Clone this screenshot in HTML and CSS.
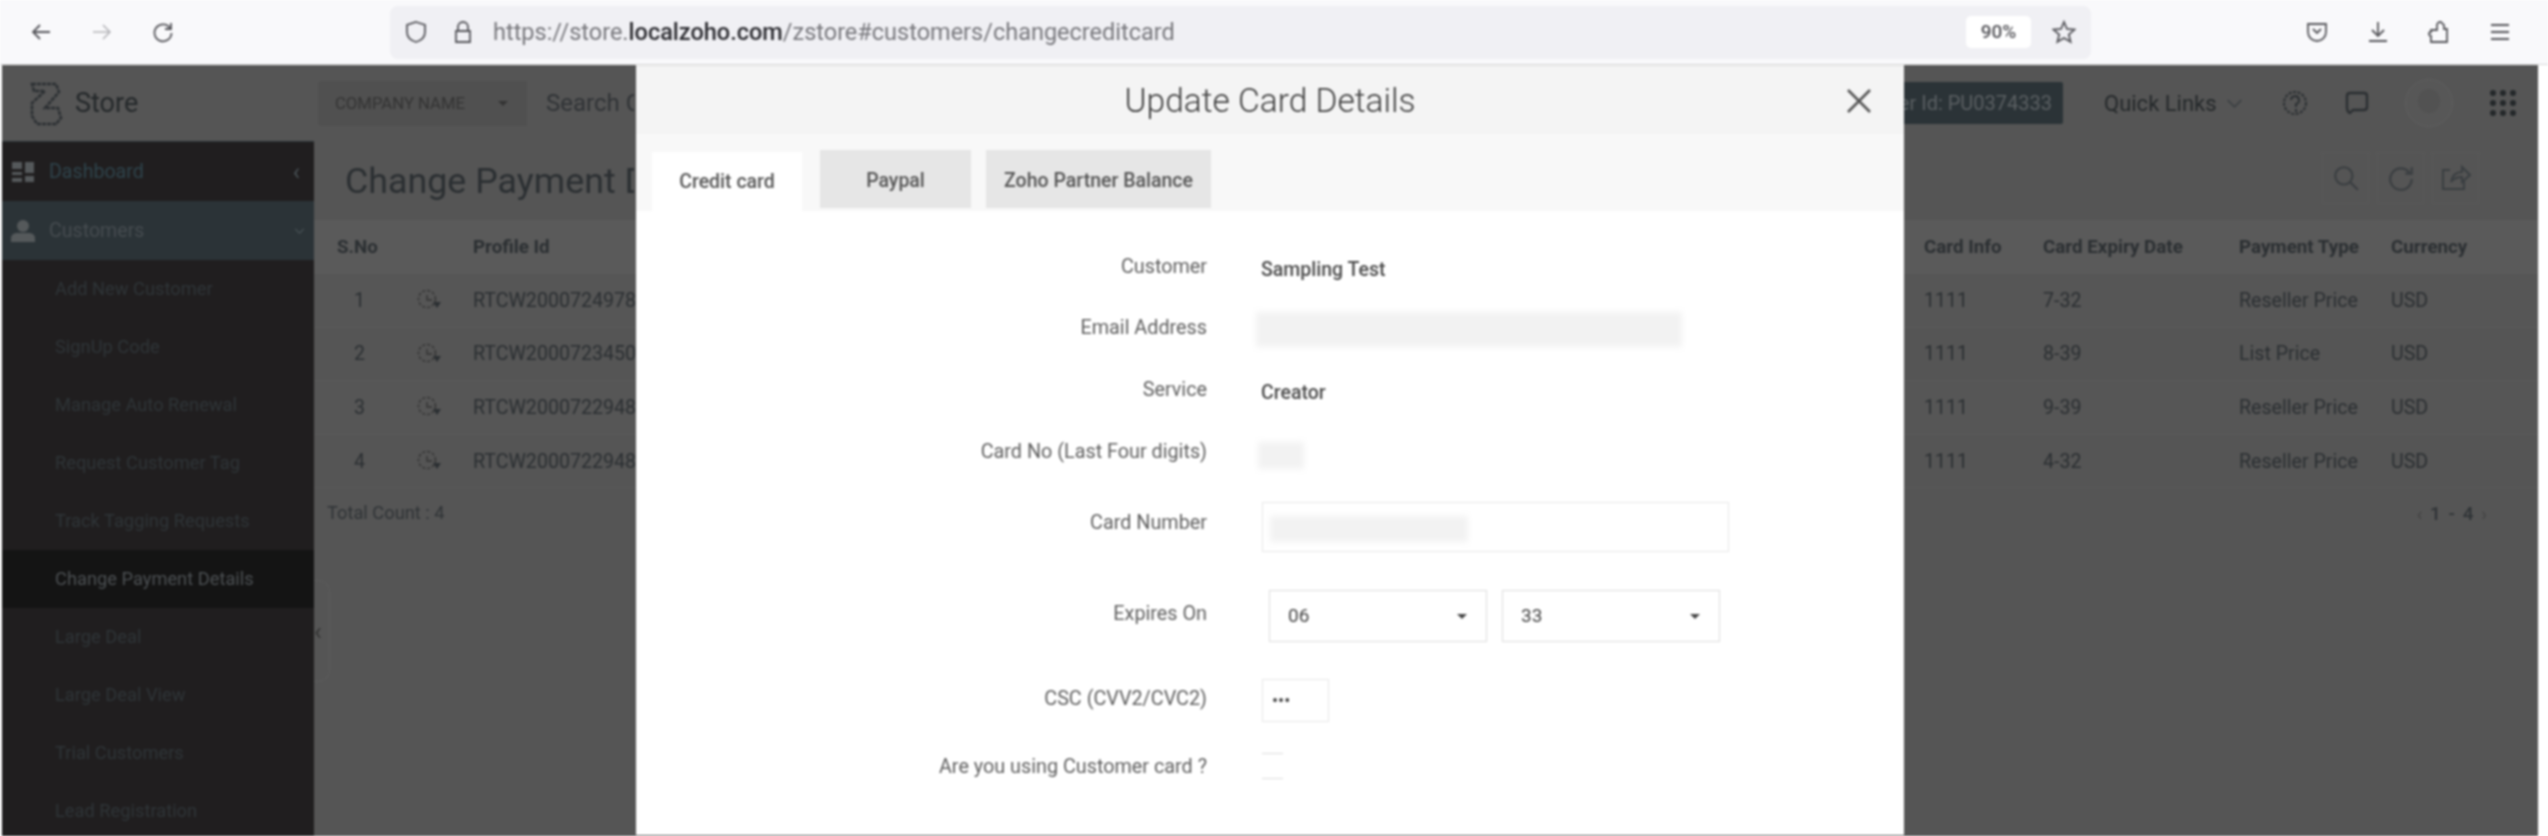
FILE: index.html
```html
<!DOCTYPE html>
<html lang="en">
<head>
    <meta charset="UTF-8">
    <meta name="viewport" content="width=device-width, initial-scale=1.0">
    <link rel="stylesheet" href="styles.css">
    <title>Update Card Details</title>
</head>
<body>
    <svg class="defs" width="0" height="0">
        <symbol id="renew" viewBox="0 0 26 26">
            <circle cx="11" cy="12" r="8.5" fill="none" stroke="#333" stroke-width="1.4" stroke-dasharray="3 2"/>
            <path d="M11 8v5h5" fill="none" stroke="#333" stroke-width="1.4"/>
            <path d="M17 15h8l-4 6z" fill="#2b2f32"/>
        </symbol>
    </svg>

    <!-- browser toolbar -->
    <div class="toolbar">
        <div class="nav-icons">
            <svg class="ico" viewBox="0 0 24 24"><path d="M21 12H4M11 5l-7 7 7 7"/></svg>
            <svg class="ico ico-off" viewBox="0 0 24 24"><path d="M3 12h17M13 5l7 7-7 7"/></svg>
            <svg class="ico" viewBox="0 0 24 24"><path d="M19 8a8.5 8.5 0 1 0 1.5 5M20 3v6h-6"/></svg>
        </div>
        <div class="urlbar">
            <svg class="ico" viewBox="0 0 24 24"><path d="M12 2l9 3v7c0 5-4 8.500-9 10-5-1.500-9-5-9-10V5z"/></svg>
            <svg class="ico" viewBox="0 0 24 24"><path d="M7 11V7a5 5 0 0 1 10 0v4M5 11h14v11H5z"/></svg>
            <div class="url">https://store.<b>localzoho.com</b>/zstore#customers/changecreditcard</div>
            <div class="zoom-badge">90%</div>
            <svg class="ico" viewBox="0 0 24 24"><path d="M12 2l3 7 7.500.6-5.700 4.900 1.800 7.300L12 18l-6.600 3.800 1.800-7.300L1.500 9.600 9 9z"/></svg>
        </div>
        <div class="tool-icons">
            <svg class="ico" viewBox="0 0 24 24"><path d="M3 4h18v8a9 9 0 0 1-18 0zM8 9l4 4 4-4"/></svg>
            <svg class="ico" viewBox="0 0 24 24"><path d="M12 2v14M6 10l6 6 6-6M3 21h18"/></svg>
            <svg class="ico" viewBox="0 0 24 24"><path d="M4 22v-6a2 2 0 0 1 0-4v-2h6V6a3.500 3.500 0 0 1 4-4l3 3v4h3v13z"/></svg>
            <svg class="ico" viewBox="0 0 24 24"><path d="M3 5h18M3 12h18M3 19h18"/></svg>
        </div>
    </div>

    <div class="page">
        <div class="topbar">
            <div class="brand">
                <svg class="brand-logo" viewBox="0 0 36 46"><path d="M4 4h24l3 8-14 16h13l3 10-5 6H9l-5-8V23l13-12H6z"/></svg>
                <span>Store</span>
            </div>
            <div class="company-select">COMPANY NAME<i class="caret"></i></div>
            <div class="search-box"><span class="search-text">Search Customers</span></div>
            <div class="partner-id"><span>Partner Id: PU0374333</span></div>
            <div class="quick-links">Quick Links
                <svg class="dim-ico chev" viewBox="0 0 20 12"><path d="M2 2l8 8 8-8"/></svg>
            </div>
            <svg class="dim-ico help" viewBox="0 0 26 26"><circle cx="13" cy="13" r="11" stroke-dasharray="3 1.500"/><path d="M9 10a4 4 0 1 1 5 4v3M14 19v3"/></svg>
            <svg class="dim-ico chat" viewBox="0 0 26 26"><path d="M6 3h14q3 0 3 3v11q0 3-3 3H9l-3 3q-3-1-3-6V6q0-3 3-3z" stroke-width="2.400"/></svg>
            <div class="avatar"><div class="avatar-face"></div></div>
            <div class="apps-grid"><i></i><i></i><i></i><i></i><i></i><i></i><i></i><i></i><i></i></div>
        </div>

        <div class="layout">
            <aside class="sidebar">
                <div class="side-head side-dash">
                    <svg class="side-ico" viewBox="0 0 24 24"><path d="M1 2h10v7H1zM14 2h9v11h-9zM1 12h10v3H1zM1 18h10v4H1zM14 16h9v6h-9z"/></svg>
                    Dashboard<span class="side-arrow">‹</span>
                </div>
                <div class="side-head side-cust">
                    <svg class="side-ico" viewBox="0 0 24 24"><circle cx="12" cy="7" r="6"/><path d="M0 23v-4q0-4 5-5h14q5 1 5 5v4z"/></svg>
                    Customers<svg class="dim-ico side-down" viewBox="0 0 20 12"><path d="M2 2l8 8 8-8"/></svg>
                </div>
                <ul class="side-list">
                    <li>Add New Customer</li>
                    <li>SignUp Code</li>
                    <li>Manage Auto Renewal</li>
                    <li>Request Customer Tag</li>
                    <li>Track Tagging Requests</li>
                    <li class="active">Change Payment Details</li>
                    <li>Large Deal</li>
                    <li>Large Deal View</li>
                    <li>Trial Customers</li>
                    <li>Lead Registration</li>
                </ul>
            </aside>
            <div class="collapse-tab">‹</div>

            <main class="content">
                <div class="title-row">
                    <h1>Change Payment Details</h1>
                    <div class="actions">
                        <span class="act-btn"><svg class="dim-ico" viewBox="0 0 26 26"><circle cx="11" cy="11" r="8"/><path d="M17 17l7 7"/></svg></span>
                        <span class="act-btn"><svg class="dim-ico" viewBox="0 0 26 26"><path d="M21 8a10 10 0 1 0 2 6M23 3v6h-6"/></svg></span>
                        <span class="act-btn"><svg class="dim-ico" viewBox="0 0 30 26"><path d="M9 5H2v19h21v-8M10 17q2-10 11-10V2l8 8-8 7v-5q-7 0-11 5z"/></svg></span>
                    </div>
                </div>

                <div class="row row-head">
                    <span>S.No</span><span></span><span>Profile Id</span><span>Card Info</span><span>Card Expiry Date</span><span>Payment Type</span><span>Currency</span>
                </div>
                <div class="row row-band">
                    <span class="num">1</span><svg class="renew"><use href="#renew"/></svg><span>RTCW2000724978</span><span>1111</span><span>7-32</span><span>Reseller Price</span><span>USD</span>
                </div>
                <div class="row">
                    <span class="num">2</span><svg class="renew"><use href="#renew"/></svg><span>RTCW2000723450</span><span>1111</span><span>8-39</span><span>List Price</span><span>USD</span>
                </div>
                <div class="row row-band">
                    <span class="num">3</span><svg class="renew"><use href="#renew"/></svg><span>RTCW2000722948</span><span>1111</span><span>9-39</span><span>Reseller Price</span><span>USD</span>
                </div>
                <div class="row">
                    <span class="num">4</span><svg class="renew"><use href="#renew"/></svg><span>RTCW2000722948</span><span>1111</span><span>4-32</span><span>Reseller Price</span><span>USD</span>
                </div>
                <div class="table-foot">
                    <span>Total Count : 4</span>
                    <span class="pager"><em>‹</em> 1 - 4 <em>›</em></span>
                </div>
            </main>
        </div>

        <!-- popup -->
        <div class="modal">
            <div class="modal-head">
                <h2>Update Card Details</h2>
                <svg class="modal-close" viewBox="0 0 26 26"><path d="M2 2l22 22M24 2L2 24"/></svg>
            </div>
            <div class="tabs">
                <div class="tab tab-on">Credit card</div>
                <div class="tab tab-paypal">Paypal</div>
                <div class="tab tab-balance">Zoho Partner Balance</div>
            </div>
            <div class="form">
                <div class="f-row f-customer"><label>Customer</label><div class="f-value">Sampling Test</div></div>
                <div class="f-row f-email"><label>Email Address</label><div class="smudge smudge-email"></div></div>
                <div class="f-row f-service"><label>Service</label><div class="f-value">Creator</div></div>
                <div class="f-row f-last4"><label>Card No (Last Four digits)</label><div class="smudge smudge-last4"></div></div>
                <div class="f-row f-cardno"><label>Card Number</label><div class="input input-card"><div class="smudge smudge-card"></div></div></div>
                <div class="f-row f-expiry"><label>Expires On</label>
                    <div class="selects">
                        <div class="select">06<i class="caret"></i></div>
                        <div class="select">33<i class="caret"></i></div>
                    </div>
                </div>
                <div class="f-row f-csc"><label>CSC (CVV2/CVC2)</label><div class="input input-csc">•••</div></div>
                <div class="f-row f-own"><label>Are you using Customer card ?</label><div class="check-stub"></div></div>
            </div>
        </div>
    </div>
</body>
</html>
```

FILE: styles.css
```css
*{
    box-sizing: border-box;
}

body{
    margin: 0;
    width: 2548px;
    height: 836px;
    overflow: hidden;
    background-color: #fff;
    font-family: Roboto, "Liberation Sans", sans-serif;
}

.defs{
    position: absolute;
}

/* toolbar */
.toolbar{
    height: 65px;
    display: flex;
    align-items: center;
    background-color: #f9f9fb;
    border-bottom: 1px solid #d8d8da;
    filter: blur(0.8px);
}

.ico{
    width: 24px;
    height: 24px;
    fill: none;
    stroke: #55555a;
    stroke-width: 1.8;
    flex: none;
}

.ico-off{
    stroke: #b4b4b8;
    stroke-width: 1.5;
}

.nav-icons{
    width: 390px;
    padding-left: 29px;
    display: flex;
    gap: 37px;
}

.urlbar{
    width: 1701px;
    height: 53px;
    display: flex;
    align-items: center;
    padding-left: 14px;
    padding-right: 15px;
    gap: 23px;
    border-radius: 8px;
    background-color: #f0f0f4;
}

.url{
    flex: 1;
    font-size: 23.500px;
    color: #77777c;
    margin-left: -5px;
}

.url b{
    font-weight: 500;
    color: #2b2b30;
}

.zoom-badge{
    width: 65px;
    height: 32px;
    line-height: 32px;
    text-align: center;
    font-size: 19px;
    font-weight: 500;
    color: #55555a;
    background-color: #fff;
    border-radius: 5px;
    margin-right: -2px;
}

.tool-icons{
    margin-left: 214px;
    display: flex;
    gap: 37px;
}

/* page behind the popup, already dimmed */
.page{
    position: relative;
    width: 2536px;
    height: 771px;
    margin-left: 2px;
    overflow: hidden;
    background-color: #555;
    color: #2b2f32;
    filter: blur(0.8px);
}

.topbar{
    height: 76px;
    display: flex;
    align-items: center;
    padding-left: 26px;
    white-space: nowrap;
}

.topbar > *{
    flex: none;
}

.brand{
    width: 290px;
    display: flex;
    align-items: center;
    gap: 11px;
    font-size: 27px;
    color: #24282a;
}

.brand-logo{
    width: 36px;
    height: 46px;
    fill: none;
    stroke: #2b2f32;
    stroke-width: 2.500;
    stroke-dasharray: 4 1;
}

.company-select{
    width: 209px;
    height: 45px;
    padding-left: 17px;
    display: flex;
    align-items: center;
    font-size: 16.700px;
    color: #333;
    background-color: #505050;
    border-radius: 4px 0 0 4px;
    position: relative;
}

.caret{
    position: absolute;
    right: 19px;
    top: 50%;
    margin-top: -2px;
    border-left: 5px solid transparent;
    border-right: 5px solid transparent;
    border-top: 5px solid currentColor;
}

.search-box{
    width: 1377px;
    padding-left: 19px;
    font-size: 24px;
    color: #303336;
}

/* the rest of this text sits behind the popup */
.search-text{
    display: block;
    width: 88px;
    overflow: hidden;
}

.partner-id{
    width: 159px;
    height: 42px;
    line-height: 42px;
    padding-right: 11px;
    display: flex;
    justify-content: flex-end;
    overflow: hidden;
    font-size: 20px;
    color: #5b6063;
    background-color: #2b3337;
    border-radius: 0 2px 2px 0;
}

.partner-id span{
    flex: none;
}

.quick-links{
    margin-left: 41px;
    width: 178px;
    display: flex;
    align-items: center;
    gap: 9px;
    font-size: 22px;
    color: #24282a;
}

.dim-ico{
    fill: none;
    stroke: #2b2f32;
    stroke-width: 2;
}

.chev{
    width: 17px;
    height: 11px;
    stroke: #3c4043;
}

.help{
    width: 26px;
    height: 26px;
}

.chat{
    width: 26px;
    height: 26px;
    margin-left: 36px;
}

.avatar{
    width: 48px;
    height: 48px;
    margin-left: 35px;
    padding: 9px 12px;
    border-radius: 50%;
    border: 1px solid #5f5f5f;
    background-color: #575757;
}

.avatar-face{
    height: 24px;
    background-color: #525252;
    border-radius: 50%;
}

.apps-grid{
    width: 26px;
    height: 26px;
    margin-left: 37px;
    display: grid;
    grid-template-columns: repeat(3, 6px);
    grid-template-rows: repeat(3, 6px);
    gap: 4px;
}

.apps-grid i{
    background-color: #24282a;
    border-radius: 50%;
}

.layout{
    display: flex;
    height: 695px;
}

/* sidebar */
.sidebar{
    width: 312px;
    flex: none;
    background-color: #201e1f;
    border-top: 1px solid #2b3337;
}

.side-head{
    position: relative;
    display: flex;
    align-items: center;
    padding-left: 47px;
    font-size: 19.600px;
}

.side-dash{
    height: 59px;
    color: #2f444c;
}

.side-cust{
    height: 59px;
    color: #464c50;
    background-color: #2b3337;
}

.side-ico{
    position: absolute;
    left: 9px;
    top: 18px;
    width: 24px;
    height: 24px;
    fill: #55595b;
}

.side-arrow{
    position: absolute;
    right: 14px;
    font-size: 24px;
    color: #4a5357;
}

.side-down{
    position: absolute;
    right: 9px;
    width: 11px;
    height: 8px;
    stroke: #4a5357;
}

.side-list{
    list-style: none;
    margin: 0;
    padding: 0;
}

.side-list li{
    height: 58px;
    line-height: 58px;
    padding-left: 53px;
    font-size: 18.300px;
    color: #2f3538;
}

.side-list .active{
    color: #4c5053;
    background-color: #141414;
}

.collapse-tab{
    position: absolute;
    left: 312px;
    top: 515px;
    width: 16px;
    height: 102px;
    line-height: 100px;
    font-size: 26px;
    color: #333;
    border: 1px solid #5c5c5c;
    border-left: none;
    border-radius: 0 12px 12px 0;
}

/* table */
.content{
    flex: 1;
}

.title-row{
    height: 79px;
    display: flex;
    align-items: center;
    justify-content: space-between;
    padding-left: 31px;
    padding-right: 59px;
}

.title-row h1{
    width: 289px;
    margin: 0;
    overflow: hidden;
    white-space: nowrap;
    font-size: 35.800px;
    font-weight: 400;
    color: #2b2f32;
}

.actions{
    display: flex;
    gap: 8px;
    margin-top: -6px;
}

.act-btn{
    width: 47px;
    height: 52px;
    display: flex;
    align-items: center;
    justify-content: center;
    border: 1px dotted #5c5c5c;
}

.act-btn svg{
    width: 30px;
    height: 28px;
    stroke: #3a3e41;
}

.row{
    height: 53.600px;
    padding-left: 23px;
    display: grid;
    grid-template-columns: 79px 57px 1451px 119px 196px 152px 1fr;
    align-items: center;
    font-size: 19.600px;
    color: #2b2f32;
    border-bottom: 1px solid #595959;
}

.row-head{
    height: 54px;
    font-size: 18.800px;
    font-weight: 700;
    background-color: #5a5a5a;
    border-bottom: none;
}

.row-band{
    background-color: #565656;
}

.num{
    padding-left: 17px;
}

.renew{
    width: 26px;
    height: 26px;
}

.table-foot{
    display: flex;
    justify-content: space-between;
    padding: 14px 51px 0 13px;
    font-size: 18.300px;
    color: #2f3336;
}

.pager{
    font-size: 19px;
    font-weight: 500;
    word-spacing: 3px;
}

.pager em{
    font-style: normal;
    color: #444;
}

/* popup */
.modal{
    position: absolute;
    left: 634px;
    top: 0;
    width: 1268px;
    height: 770px;
    color: #555;
    background-color: #fff;
}

.modal-head{
    height: 69px;
    position: relative;
    display: flex;
    align-items: center;
    justify-content: center;
    background-color: #f4f4f4;
    border-top: 1px solid #d8d8d8;
}

.modal-head h2{
    margin: 0;
    font-size: 33.500px;
    font-weight: 300;
    color: #3d3d3d;
}

.modal-close{
    position: absolute;
    right: 32px;
    top: 22px;
    width: 26px;
    height: 26px;
    fill: none;
    stroke: #555;
    stroke-width: 2.500;
}

.tabs{
    height: 77px;
    padding-left: 16px;
    display: flex;
    align-items: flex-end;
    background-color: #f8f8f8;
}

.tab{
    height: 58px;
    margin-bottom: 3px;
    padding-top: 3px;
    display: flex;
    align-items: center;
    justify-content: center;
    font-size: 19.500px;
    font-weight: 500;
    color: #555;
    background-color: #e6e6e6;
}

.tab-on{
    width: 150px;
    height: 59px;
    margin-bottom: 0;
    padding-top: 0;
    background-color: #fff;
}

.tab-paypal{
    width: 151px;
    margin-left: 18px;
}

.tab-balance{
    width: 225px;
    margin-left: 15px;
}

/* form rows: label column ends at 1207, value column starts at 1256 */
.form{
    padding-top: 45px;
}

.f-row{
    display: flex;
    align-items: flex-start;
}

.f-row label{
    width: 571px;
    flex: none;
    text-align: right;
    font-size: 19.800px;
    line-height: 22px;
    color: #5f5f5f;
    margin-right: 49px;
}

.f-value{
    padding-left: 5px;
    margin-top: 3px;
    font-size: 19.500px;
    line-height: 22px;
    font-weight: 500;
    color: #4a4a4a;
}

.smudge{
    background-color: #f2f2f2;
    filter: blur(3px);
}

.f-customer{ height: 61px; }
.f-email{ height: 62px; }
.f-service{ height: 62px; }
.f-last4{ height: 71px; }
.f-cardno{ height: 91px; }
.f-expiry{ height: 85px; }
.f-csc{ height: 68px; }

.smudge-email{
    width: 426px;
    height: 35px;
    margin-top: -5px;
}

.smudge-last4{
    width: 46px;
    height: 27px;
    margin-left: 2px;
    margin-top: 1px;
}

.input{
    margin-left: 6px;
    border: 1px solid #e8e8e8;
}

.input-card{
    width: 467px;
    height: 50px;
    margin-top: -10px;
    padding: 13px 7px;
}

.smudge-card{
    width: 198px;
    height: 26px;
}

.selects{
    display: flex;
    gap: 15px;
    margin-left: 13px;
    margin-top: -13px;
}

.select{
    position: relative;
    width: 218px;
    height: 52px;
    line-height: 50px;
    padding-left: 18px;
    font-size: 19px;
    color: #444;
    border: 1px solid #ddd;
}

.input-csc{
    width: 67px;
    height: 43px;
    line-height: 41px;
    margin-top: -9px;
    padding-left: 9px;
    font-size: 18px;
    color: #444;
}

.check-stub{
    width: 21px;
    height: 26px;
    margin-left: 6px;
    margin-top: -3px;
    border-top: 1px solid #ddd;
    border-bottom: 1px solid #ddd;
}
```
